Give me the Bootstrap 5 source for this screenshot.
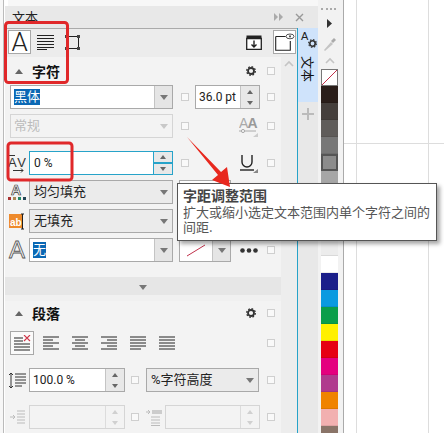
<!DOCTYPE html>
<html lang="zh">
<head>
  <meta charset="UTF-8" />
  <meta name="viewport" content="width=device-width, initial-scale=1.0" />
  <title>文本</title>
  <link href="https://cdn.jsdelivr.net/npm/bootstrap@5.3.0/dist/css/bootstrap.min.css" rel="stylesheet">
  <style>
    html, body { margin: 0; height: 433px; overflow: hidden; }
    body {
      background: #f7f7f7;
      color: #222;
      font: 13px/1.2 "Noto Sans CJK SC", sans-serif;
    }
    .sprites { position: absolute; width: 0; height: 0; }
    .app { width: 444px; height: 433px; position: relative; overflow: hidden; }
    .left-rail { width: 5px; border-left: 1px solid #bbb; margin-left: 3px; background: #fff; flex: none; }
    .dock { width: 313px; flex: none; margin-left: -3px; padding-top: 6px; }
    .dock-head { height: 22px; background: #e8e8e8; padding: 0 14px 0 7px; color: #222; }
    .dock-title { font-size: 13px; }
    .dock-main { height: 405px; }
    .panel { width: 292px; background: #f3f3f3; border-top: 1px solid #aaa; flex: none; }
    .tool-bar { height: 28px; background: #ececec; padding: 1px 1px 3px 3px; }
    .tbtn { width: 23px; height: 24px; display: flex; align-items: center; justify-content: center; border: 1px solid transparent; flex: none; }
    .tbtn.on { background: #fff; border-color: #a8a8a8; }
    .big-a { font: 300 26px/1 Roboto, sans-serif; color: #222; }
    .out-a { font: 400 24px/1 "Liberation Sans", sans-serif; color: #f3f3f3; -webkit-text-stroke: .8px #555; }
    .lines-ic { margin-left: 6px; }
    .frame-ic { margin-left: 11px; }
    .doc-btn { margin-left: 11px !important; }
    .panel-body { height: 376px; }
    .panel-col { width: 276px; flex: none; }
    .scroll-col { width: 16px; background: #ededed; flex: none; padding-top: 3px; }
    .sec-head { height: 28px; padding-right: 6px; flex: none; }
    .sec-head2 { height: 24px; padding-right: 6px; flex: none; }
    .sec-tri { width: 0; height: 0; border: 4px solid transparent; border-bottom: 5px solid #666; border-top: 0; margin-left: 10px; margin-right: 9px; }
    .sec-title { font-size: 14px; font-weight: 700; color: #111; }
    .sec-gear { margin-right: 11px; }
    .prow { height: 24px; padding-right: 6px; flex: none; }
    .mt5 { margin-top: 5px; }
    .mt6 { margin-top: 6px; }
    .mt13 { margin-top: 13px; }
    .pl5 { padding-left: 5px; }
    .ic-slot { width: 24px; flex: none; display: flex; justify-content: center; align-items: center; }
    .cb { width: 8px; height: 8px; border: 1px solid #cfcfcf; background: #f9f9f9; flex: none; display: block; }
    .gap-l { margin-left: 8px; }
    .gap-r { margin-left: 6px; }
    .gap-s { margin-left: 7px; }
    .gap-xs { margin-left: 2px; }
    .before-cb { margin-right: 9px; }
    .dots-ic { margin-left: 9px; display: block; }
    .field { height: 24px; border: 1px solid #a9a9a9; background: #fff; display: flex; flex: none; align-items: stretch; }
    .field-text { flex: 1; padding-left: 3px; display: flex; align-items: center; font: 13px/1.2 Roboto, "Noto Sans CJK SC", sans-serif; white-space: nowrap; overflow: hidden; }
    .field-text.num { font-size: 12px; }
    .hl { background: #0a68b4; color: #fff; padding: 0 0 1px 0; }
    .drop { width: 18px; flex: none; background: #e5e5e5; border-left: 1px solid #c4c4c4; display: flex; align-items: center; justify-content: center; }
    .arrow { width: 0; height: 0; border: 4px solid transparent; border-top: 5px solid #777; border-bottom: 0; display: block; }
    .arrow-up { width: 0; height: 0; border: 3px solid transparent; border-bottom: 4px solid #666; border-top: 0; display: block; }
    .arrow-dn { width: 0; height: 0; border: 3px solid transparent; border-top: 4px solid #666; border-bottom: 0; display: block; }
    .spin { width: 19px; flex: none; background: #e8e8e8; border-left: 1px solid #c4c4c4; display: flex; flex-direction: column; }
    .spin > div { flex: 1; display: flex; align-items: center; justify-content: center; }
    .w-163 { width: 163px; }
    .w-144 { width: 144px; }
    .w-65 { width: 65px; }
    .w-96 { width: 96px; }
    .w-113 { width: 113px; }
    .w-95 { width: 95px; }
    .w-52 { width: 52px; }
    .is-off { border-color: #d5d5d5; background: #f3f3f3; }
    .is-off .field-text { color: #bbb; }
    .is-off .drop { background: #f3f3f3; border-left-color: transparent; }
    .is-off .arrow { border-top-color: #c8c8c8; }
    .is-off .spin { background: #f3f3f3; border-left-color: #dcdcdc; }
    .is-off .arrow-up { border-bottom-color: #d0d0d0; }
    .is-off .arrow-dn { border-top-color: #d0d0d0; }
    .is-gray { background: #ebebeb; }
    .is-gray .drop { background: #ebebeb; border-left-color: transparent; }
    .is-gray .field-text { padding-left: 4px; }
    .is-focus { border-color: #27a3c9; }
    .is-focus .spin { border-left-color: #27a3c9; }
    .is-focus .spin > div + div { border-top: 2px solid #27a3c9; }
    .is-focus .field-text { padding-left: 4px; }
    .fold-bar { height: 18px; margin-top: 15px; background: #e6e6e6; display: flex; align-items: center; justify-content: center; padding-top: 2px; flex: none; }
    .fold-gap { height: 6px; background: #f0f0f0; flex: none; }
    .align-box { width: 24px; height: 24px; border: 1px solid #a8a8a8; background: #fafafa; display: flex; align-items: center; justify-content: center; flex: none; }
    .align-ic { margin-left: 13px; flex: none; display: block; }
    .align-ic.first { margin-left: 9px; }
    .tab-strip { width: 21px; border-left: 1px solid #27a3c9; background: #e8e8e8; flex: none; }
    .tab-on { height: 74px; background: #cfe3fb; padding-top: 2px; }
    .tab-word { writing-mode: vertical-rl; text-orientation: sideways; font-size: 13px; line-height: 13px; color: #111; margin: 6px auto 0; }
    .tab-plus { padding-top: 6px; }
    .palette { width: 25px; flex: none; background: #f2f2f2; padding-left: 3px; }
    .pal-dots { height: 4px; width: 15px; margin: 8px 0 0 0; border-top: 2px dotted #aaa; flex: none; }
    .pal-tool { height: 17px; width: 17px; display: flex; align-items: center; justify-content: center; flex: none; }
    .pal-gap { margin-top: 3px; }
    .swatch { width: 17px; height: 17px; flex: none; border-bottom: 1px solid rgba(0,0,0,.08); }
    .swatch.sel { border: 2px solid #555; }
    .swatch.none { background: #fff; border: 1px solid #777; padding: 0; }
    .swatch.none svg { display: block; }
    .canvas-area {
      flex: 1;
      border-left: 1px solid #aaa;
      background:
        linear-gradient(#ddd, #ddd) 12px 0 / 1px 100% no-repeat,
        linear-gradient(#ddd, #ddd) 84px 0 / 1px 100% no-repeat,
        linear-gradient(#ddd, #ddd) 0 143px / 100% 1px no-repeat,
        #fff;
    }
    .tip {
      position: absolute; left: 177px; top: 183px; width: 260px; height: 58px;
      background: #fff; border: 1px solid #555; box-shadow: 3px 3px 4px rgba(0,0,0,.35);
      padding: 2px 5px; color: #555; font-size: 13px; line-height: 15px; z-index: 5;
    }
    .tip-title { font-size: 14px; font-weight: 700; color: #444; line-height: 18px; }
    .marks { position: absolute; left: 0; top: 0; z-index: 6; pointer-events: none; }
  </style>
</head>
<body>
  <svg class="sprites">
    <symbol id="gear" viewBox="0 0 10 10">
      <circle cx="5" cy="5" r="3" fill="none" stroke="#333" stroke-width="1.8"/>
      <circle cx="5" cy="5" r="4.3" fill="none" stroke="#333" stroke-width="1.3" stroke-dasharray="1.7 1.67"/>
    </symbol>
    <symbol id="al-left" viewBox="0 0 16 15"><path d="M0 1h16M0 4h10M0 7h16M0 10h10M0 13h16" stroke="#222" stroke-width="1"/></symbol>
    <symbol id="al-center" viewBox="0 0 16 15"><path d="M0 1h16M3 4h10M0 7h16M3 10h10M0 13h16" stroke="#222" stroke-width="1"/></symbol>
    <symbol id="al-right" viewBox="0 0 16 15"><path d="M0 1h16M6 4h10M0 7h16M6 10h10M0 13h16" stroke="#222" stroke-width="1"/></symbol>
    <symbol id="al-full" viewBox="0 0 16 15"><path d="M0 1h16M0 4h16M0 7h16M0 10h16M0 13h11" stroke="#222" stroke-width="1"/></symbol>
    <symbol id="al-all" viewBox="0 0 16 15"><path d="M0 1h16M0 4h16M0 7h16M0 10h16M0 13h16" stroke="#222" stroke-width="1"/></symbol>
  </svg>

  <div class="app d-flex">
    <div class="left-rail"></div>

    <div class="dock d-flex flex-column">
      <div class="dock-head d-flex align-items-center justify-content-between">
        <span class="dock-title">文本</span>
        <span class="d-flex align-items-center gap-2">
          <svg width="9" height="8" viewBox="0 0 9 8"><path d="M0 0l4 4-4 4zM5 0l4 4-4 4z" fill="#aaa"/></svg>
          <svg width="9" height="9" viewBox="0 0 9 9" class="ms-1"><path d="M1 1l7 7M8 1L1 8" stroke="#999" stroke-width="1.4"/></svg>
        </span>
      </div>

      <div class="dock-main d-flex">
        <div class="panel">
          <div class="tool-bar d-flex align-items-center">
            <button class="btn p-0 rounded-0 tbtn on"><span class="big-a">A</span></button>
            <svg class="lines-ic" width="17" height="16" viewBox="0 0 17 16"><path d="M0 1.5h17M0 4.5h17M0 7.5h17M0 10.5h17M0 13.5h17M0 15.5h10" stroke="#222" stroke-width="1"/></svg>
            <svg class="frame-ic" width="15" height="15" viewBox="0 0 15 15"><path d="M1.5 1.5h12v12h-12z" fill="none" stroke="#222" stroke-width="1"/><path d="M0 0h3v3H0zM12 0h3v3h-3zM0 12h3v3H0zM12 12h3v3h-3z" fill="#444"/></svg>
            <svg class="ms-auto" width="16" height="15" viewBox="0 0 16 15"><path d="M.7 3.5h14.6v11H.7z" fill="#fff" stroke="#222" stroke-width="1.3"/><path d="M.5.5h15v3H.5z" fill="#222"/><path d="M8 5.5v6M5.5 9.5L8 12l2.5-2.5" fill="none" stroke="#222" stroke-width="1.4"/></svg>
            <button class="btn p-0 rounded-0 tbtn on doc-btn">
              <svg width="20" height="18" viewBox="0 0 20 18"><path d="M.7 3.5h10M.7 3.5v13.8h14.6V8" fill="none" stroke="#222" stroke-width="1.1"/><ellipse cx="15" cy="3.4" rx="4" ry="2.4" fill="none" stroke="#555"/><circle cx="15" cy="3.4" r="1.1" fill="#555"/></svg>
            </button>
          </div>

          <div class="panel-body d-flex">
            <div class="panel-col d-flex flex-column">
              <div class="sec-head d-flex align-items-center">
                <span class="sec-tri"></span><span class="sec-title">字符</span>
                <svg class="ms-auto sec-gear" width="10" height="10"><use href="#gear"/></svg>
                <span class="cb"></span>
              </div>

              <div class="prow pl5 d-flex align-items-center">
                <div class="field w-163"><div class="field-text"><span class="hl">黑体</span></div><div class="drop"><i class="arrow"></i></div></div>
                <span class="cb gap-l"></span>
                <div class="field w-65 gap-r"><div class="field-text num">36.0 pt</div><div class="spin"><div><i class="arrow-up"></i></div><div><i class="arrow-dn"></i></div></div></div>
                <span class="cb ms-auto"></span>
              </div>

              <div class="prow pl5 mt5 d-flex align-items-center">
                <div class="field w-163 is-off"><div class="field-text">常规</div><div class="drop"><i class="arrow"></i></div></div>
                <span class="cb gap-l"></span>
                <svg class="ms-auto before-cb" width="19" height="22" viewBox="0 0 19 22">
                  <text x="0" y="13" font-family="Liberation Sans" font-size="14" fill="#aaa">A</text>
                  <text x="8.5" y="13" font-family="Liberation Sans" font-size="14" font-weight="700" fill="#999">A</text>
                  <path d="M0 16h17" stroke="#aaa"/><circle cx="4" cy="16" r="1.6" fill="#f3f3f3" stroke="#aaa"/><path d="M19 22h-5l5-4z" fill="#ccc"/>
                </svg>
                <span class="cb"></span>
              </div>

              <div class="prow mt13 d-flex align-items-center">
                <span class="ic-slot">
                  <svg width="18" height="20" viewBox="0 0 18 20">
                    <path d="M1 2.5h6" stroke="#333"/>
                    <text x="0" y="14" font-family="Liberation Sans" font-size="13" textLength="18" fill="#333">AV</text>
                    <path d="M5 17.5h10M13 15.5l2 2-2 2" fill="none" stroke="#333"/>
                  </svg>
                </span>
                <div class="field w-144 is-focus"><div class="field-text num">0 %</div><div class="spin"><div><i class="arrow-up"></i></div><div><i class="arrow-dn"></i></div></div></div>
                <span class="cb gap-l"></span>
                <svg class="ms-auto before-cb" width="18" height="19" viewBox="0 0 18 19">
                  <path d="M2 1v7a5 5 0 0 0 10 0V1" fill="none" stroke="#222" stroke-width="1.4"/><path d="M0 16h14" stroke="#222" stroke-width="1.4"/><path d="M18 19h-5l5-4z" fill="#888"/>
                </svg>
                <span class="cb"></span>
              </div>

              <div class="prow mt5 d-flex align-items-center">
                <span class="ic-slot">
                  <svg width="18" height="20" viewBox="0 0 18 20">
                    <text x="3" y="13" font-family="Liberation Sans" font-size="14" font-weight="700" fill="none" stroke="#333" stroke-width=".7">A</text>
                    <path d="M0 15h3v3H0z" fill="#a33"/><path d="M5 15h3v3H5z" fill="#a85"/><path d="M10 15h3v3h-3z" fill="#286"/><path d="M15 15h3v3h-3z" fill="#245"/>
                  </svg>
                </span>
                <div class="field w-144 is-gray"><div class="field-text">均匀填充</div><div class="drop"><i class="arrow"></i></div></div>
                <div class="field w-52 gap-r"></div>
              </div>

              <div class="prow mt5 d-flex align-items-center">
                <span class="ic-slot">
                  <svg width="16" height="17" viewBox="0 0 16 17">
                    <path d="M0 1h13v14H0z" fill="#ee8a2c"/>
                    <text x="1" y="13" font-family="Liberation Sans" font-size="10" font-weight="700" fill="#fff">ab</text>
                    <path d="M12 1h3M13.5 1v15M12 16h3" fill="none" stroke="#222"/>
                  </svg>
                </span>
                <div class="field w-144 is-gray"><div class="field-text">无填充</div><div class="drop"><i class="arrow"></i></div></div>
              </div>

              <div class="prow mt5 d-flex align-items-center">
                <span class="ic-slot"><span class="out-a">A</span></span>
                <div class="field w-144"><div class="field-text"><span class="hl">无</span></div><div class="drop"><i class="arrow"></i></div></div>
                <div class="field w-52 gap-r">
                  <div class="field-text p-0 justify-content-center"><svg width="20" height="13" viewBox="0 0 20 13"><path d="M1 12L19 1" stroke="#c0304a"/></svg></div>
                  <div class="drop"><i class="arrow"></i></div>
                </div>
                <svg class="dots-ic" width="18" height="5" viewBox="0 0 18 5"><circle cx="2.5" cy="2.5" r="2.3" fill="#333"/><circle cx="9" cy="2.5" r="2.3" fill="#333"/><circle cx="15.5" cy="2.5" r="2.3" fill="#333"/></svg>
                <span class="cb ms-auto"></span>
              </div>

              <div class="fold-bar"><i class="arrow"></i></div>
              <div class="fold-gap"></div>

              <div class="sec-head2 d-flex align-items-center">
                <span class="sec-tri"></span><span class="sec-title">段落</span>
                <svg class="ms-auto sec-gear" width="10" height="10"><use href="#gear"/></svg>
                <span class="cb"></span>
              </div>

              <div class="prow pl5 mt6 d-flex align-items-center">
                <div class="align-box">
                  <svg width="17" height="17" viewBox="0 0 17 17"><path d="M0 3h9M0 6h9M0 9h16M0 12h16M0 15h16" stroke="#222" stroke-width="1"/><path d="M10 0l6 6M16 0l-6 6" stroke="#d0364a" stroke-width="1.1"/></svg>
                </div>
                <svg class="align-ic first" width="16" height="15"><use href="#al-left"/></svg>
                <svg class="align-ic" width="16" height="15"><use href="#al-center"/></svg>
                <svg class="align-ic" width="16" height="15"><use href="#al-right"/></svg>
                <svg class="align-ic" width="16" height="15"><use href="#al-full"/></svg>
                <svg class="align-ic" width="16" height="15"><use href="#al-all"/></svg>
                <span class="cb ms-auto"></span>
              </div>

              <div class="prow mt13 d-flex align-items-center">
                <span class="ic-slot">
                  <svg width="17" height="17" viewBox="0 0 17 17"><path d="M2 1v15M0 3l2-2 2 2M0 14l2 2 2-2" fill="none" stroke="#333"/><path d="M6 2h11M6 5h11M6 8h11M6 11h11M6 14h7" stroke="#333"/></svg>
                </span>
                <div class="field w-96"><div class="field-text num">100.0 %</div><div class="spin"><div><i class="arrow-up"></i></div><div><i class="arrow-dn"></i></div></div></div>
                <span class="cb gap-r"></span>
                <div class="field w-113 is-gray gap-s"><div class="field-text">%字符高度</div><div class="drop"><i class="arrow"></i></div></div>
                <span class="cb ms-auto"></span>
              </div>

              <div class="prow mt13 d-flex align-items-center">
                <span class="ic-slot">
                  <svg width="17" height="17" viewBox="0 0 17 17"><path d="M1 8h5M4 6l2 2-2 2" fill="none" stroke="#bbb"/><path d="M8 2h8M8 5h8M8 8h8M8 11h8M8 14h8" stroke="#bbb"/></svg>
                </span>
                <div class="field w-96 is-off"><div class="field-text"></div><div class="spin"><div><i class="arrow-up"></i></div><div><i class="arrow-dn"></i></div></div></div>
                <span class="cb gap-r"></span>
                <svg class="flex-shrink-0 gap-s" width="17" height="17" viewBox="0 0 17 17"><path d="M0 3h4M2 1l2 2-2 2" fill="none" stroke="#bbb"/><path d="M6 1h10v4H6z" fill="#ccc"/><path d="M5 8h9M5 11h9M5 14h9M5 16.5h9" stroke="#bbb"/></svg>
                <div class="field w-95 is-off gap-xs"><div class="field-text"></div><div class="spin"><div><i class="arrow-up"></i></div><div><i class="arrow-dn"></i></div></div></div>
                <span class="cb ms-auto"></span>
              </div>
            </div>

            <div class="scroll-col d-flex justify-content-center">
              <svg width="10" height="7" viewBox="0 0 10 7"><path d="M1 6l4-4 4 4" fill="none" stroke="#c4c4c4" stroke-width="1.6"/></svg>
            </div>
          </div>
        </div>

        <div class="tab-strip">
          <div class="tab-on d-flex flex-column">
            <svg width="20" height="20" viewBox="0 0 20 20">
              <text x="3" y="10" font-family="Liberation Sans" font-size="11" fill="#222">A</text>
              <g transform="translate(10 9)"><use href="#gear" width="9" height="9"/></g>
            </svg>
            <span class="tab-word">文本</span>
          </div>
          <div class="tab-plus d-flex justify-content-center">
            <svg width="12" height="12" viewBox="0 0 12 12"><path d="M6 0v12M0 6h12" stroke="#bbb" stroke-width="2"/></svg>
          </div>
        </div>
      </div>
    </div>

    <div class="palette d-flex flex-column" id="palette">
      <div class="pal-dots"></div>
      <div class="pal-tool pal-gap"><svg width="5" height="9" viewBox="0 0 5 9"><path d="M0 0l5 4.5L0 9z" fill="#333"/></svg></div>
      <div class="pal-tool pal-gap"><svg width="14" height="14" viewBox="0 0 14 14"><path d="M1 13l7-8 2 2-8 7z" fill="#c4c4c4"/><path d="M8 4l3-3 2 2-3 3z" fill="#aaa"/></svg></div>
      <div class="pal-tool"><svg width="10" height="7" viewBox="0 0 10 7"><path d="M1 6l4-4 4 4" fill="none" stroke="#c4c4c4" stroke-width="1.6"/></svg></div>
      <div class="swatch none"><svg width="15" height="15" viewBox="0 0 15 15"><path d="M0 15L15 0" stroke="#c0304a"/></svg></div>
    </div>

    <div class="canvas-area"></div>

    <div class="tip">
      <div class="tip-title">字距调整范围</div>
      <div>扩大或缩小选定文本范围内单个字符之间的</div>
      <div>间距.</div>
    </div>

    <svg class="marks" width="444" height="433" viewBox="0 0 444 433">
      <rect x="5.5" y="22.5" width="62" height="60" rx="3" fill="none" stroke="#e0282a" stroke-width="3"/>
      <rect x="8" y="143" width="64" height="37" rx="3" fill="none" stroke="#e0282a" stroke-width="3"/>
      <path d="M187 137L221 172 227 167 230 187 212 180 218 175z" fill="#e8281e"/>
    </svg>
  </div>

  <script src="https://cdn.jsdelivr.net/npm/bootstrap@5.3.0/dist/js/bootstrap.bundle.min.js"></script>
  <script>
    // palette colours, top to bottom
    const colours = ['#2a1e1a', '#453f3c', '#5f5c5a', '#777777', '#8c8c8c', '#a6a6a6', '#b3b3b3', '#c4c4c4', '#d9d9d9', '#ececec', '#ffffff',
      '#1b1f8a', '#0a9ae0', '#0a9e4a', '#fff000', '#e60012', '#e4007f', '#b03a8e', '#f08300', '#f2b0b0', '#8a7468'];
    const palette = document.getElementById('palette');
    colours.forEach((c, i) => {
      const s = document.createElement('div');
      s.className = i === 4 ? 'swatch sel' : 'swatch';
      s.style.background = c;
      palette.appendChild(s);
    });
  </script>
</body>
</html>
